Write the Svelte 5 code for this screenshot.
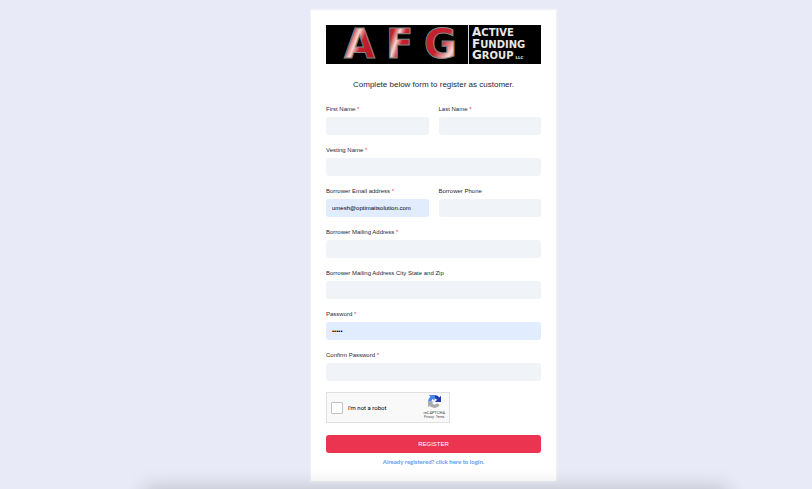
<script>
  let email = $state('umesh@optimaitsolution.com');
  let password = $state('12345');
  const rows = [
    [{ id: 'first', label: 'First Name', required: true }, { id: 'last', label: 'Last Name', required: true }],
    [{ id: 'vesting', label: 'Vesting Name', required: true }],
    [{ id: 'email', label: 'Borrower Email address', required: true }, { id: 'phone', label: 'Borrower Phone' }],
    [{ id: 'mailing', label: 'Borrower Mailing Address', required: true }],
    [{ id: 'city', label: 'Borrower Mailing Address City State and Zip' }],
    [{ id: 'password', label: 'Password', required: true }],
    [{ id: 'confirm', label: 'Confirm Password', required: true }]
  ];
</script>

<main class="page">
  <section class="card">
    <svg class="logo" viewBox="0 0 215 39" role="img" aria-label="AFG Active Funding Group LLC">
      <defs>
        <linearGradient id="metal" x1="0" y1="0.2" x2="1" y2="0.8">
          <stop offset="0" stop-color="#b5121f" />
          <stop offset="0.2" stop-color="#c4202d" />
          <stop offset="0.38" stop-color="#f4d6d0" />
          <stop offset="0.55" stop-color="#c4202d" />
          <stop offset="1" stop-color="#b5121f" />
        </linearGradient>
        <linearGradient id="metal-g" x1="0" y1="0" x2="1" y2="1">
          <stop offset="0" stop-color="#c4202d" />
          <stop offset="0.5" stop-color="#c4202d" />
          <stop offset="0.75" stop-color="#f4d6d0" />
          <stop offset="1" stop-color="#b5121f" />
        </linearGradient>
      </defs>
      <rect width="215" height="39" fill="#000" />
      <g class="mark">
        <text x="18" y="33">A</text>
        <text x="60" y="33">F</text>
        <text x="98" y="33" class="last">G</text>
      </g>
      <rect x="142" width="1" height="39" fill="#dcdcdc" />
      <g class="words">
        <text x="146" y="11">A<tspan class="small">CTIVE</tspan></text>
        <text x="146" y="23">F<tspan class="small">UNDING</tspan></text>
        <text x="146" y="34">G<tspan class="small">ROUP</tspan><tspan class="llc" dx="2">LLC</tspan></text>
      </g>
    </svg>

    <h1>Complete below form to register as customer.</h1>

    <form onsubmit={(e) => e.preventDefault()}>
      {#each rows as row}
        <div class="row">
          {#each row as field}
            <div class="field">
              <label for={field.id}>{field.label}{#if field.required}<span class="star">&nbsp;*</span>{/if}</label>
              {#if field.id === 'email'}
                <input id="email" class="filled" type="email" bind:value={email} />
              {:else if field.id === 'password'}
                <input id="password" class="filled" type="password" bind:value={password} />
              {:else}
                <input id={field.id} type={field.id === 'confirm' ? 'password' : 'text'} />
              {/if}
            </div>
          {/each}
        </div>
      {/each}

      <div class="captcha">
        <label class="robot"><input type="checkbox" />I'm not a robot</label>
        <div class="brand">
          <svg viewBox="0 0 64 64" aria-hidden="true">
            <g fill="none" stroke-width="17">
              <path stroke="#ababab" d="M9 32a23 23 0 0 0 42 13" />
              <path stroke="#4285f4" d="M9 32A23 23 0 0 1 32 9" />
              <path stroke="#1c3aa9" d="M32 9a23 23 0 0 1 19 10" />
            </g>
            <path fill="#1c3aa9" d="M64 4v30H34z" />
            <path fill="#4285f4" d="M4 0h28v28z" />
            <path fill="#ababab" d="M0 60V32h28z" />
          </svg>
          <span class="name">reCAPTCHA</span>
          <span class="terms"><a href="#privacy">Privacy</a> - <a href="#terms">Terms</a></span>
        </div>
      </div>

      <button type="submit">REGISTER</button>
    </form>
    <a class="login" href="#login">Already registered? click here to login.</a>
  </section>
  <div class="shade"></div>
</main>

<style>
  :global(body) { margin: 0; background: #e8ebf7; }
  * { box-sizing: border-box; }
  .page {
    position: relative;
    overflow: hidden;
    min-height: 100vh;
    padding: 10px 0 7px 55px;
    font-family: "Liberation Sans", Arial, sans-serif;
    color: #1f1f38;
  }
  .card {
    width: 100%;
    max-width: 245px;
    margin: 0 auto;
    padding: 15px;
    background: #fff;
    box-shadow: 0 0 1px 1px #eff0f6;
  }
  .logo { display: block; width: 100%; height: auto; overflow: visible; }
  .mark {
    font: bold 40px "DejaVu Sans", sans-serif;
    fill: url(#metal);
    stroke: #858585;
    stroke-width: 1;
  }
  .mark .last { fill: url(#metal-g); }
  .words { font: bold 12px "DejaVu Sans", sans-serif; fill: #e8e8e8; }
  .small { font-size: 10px; }
  .llc { font-size: 4px; }
  h1 {
    margin: 16px 0 15px;
    font-size: 8px;
    line-height: 10px;
    font-weight: 400;
    text-align: center;
  }
  .row { display: flex; gap: 10px; margin-bottom: 11px; }
  .field { flex: 1; min-width: 0; display: flex; flex-direction: column; gap: 4px; }
  .field label { font-size: 6px; line-height: 8px; }
  .star { color: #ee3450; }
  .field input {
    width: 100%;
    height: 18px;
    padding: 0 6px;
    border: 0;
    border-radius: 3px;
    background: #f0f4f9;
    font: 6px "Liberation Sans", Arial, sans-serif;
    color: #000;
  }
  .field input.filled { background: #e1ecff; }
  .captcha {
    display: flex;
    align-items: center;
    justify-content: space-between;
    width: 124px;
    height: 31px;
    padding: 0 4px;
    border: 1px solid #e0e0e0;
    background: #f9f9f9;
    font-family: Roboto, sans-serif;
  }
  .robot { display: flex; align-items: center; gap: 5px; font-size: 6px; color: #000; }
  .robot input {
    appearance: none;
    width: 12px;
    height: 12px;
    margin: 0;
    border: 1px solid #c1c1c1;
    border-radius: 1px;
    background: #fff;
  }
  .brand { display: flex; flex-direction: column; align-items: center; color: #444; }
  .brand svg { width: 13px; height: 13px; margin-bottom: 2px; }
  .name { font-size: 4px; line-height: 5px; }
  .terms { font-size: 3px; line-height: 5px; white-space: nowrap; }
  .terms a { color: inherit; text-decoration: none; }
  button {
    display: block;
    width: 100%;
    height: 18px;
    margin-top: 12px;
    padding: 0;
    border: 0;
    border-radius: 3px;
    background: #eb344f;
    color: #fff;
    font: 6px "Liberation Sans", Arial, sans-serif;
  }
  .login {
    display: block;
    margin-top: 5px;
    font: bold 6px/8px Lato, sans-serif;
    color: #5b9cf5;
    text-align: center;
    text-decoration: none;
  }
  .shade {
    position: absolute;
    left: 145px;
    right: 85px;
    bottom: -20px;
    height: 20px;
    box-shadow: 0 0 20px 1px rgba(0, 0, 0, 0.2);
    pointer-events: none;
  }
</style>
